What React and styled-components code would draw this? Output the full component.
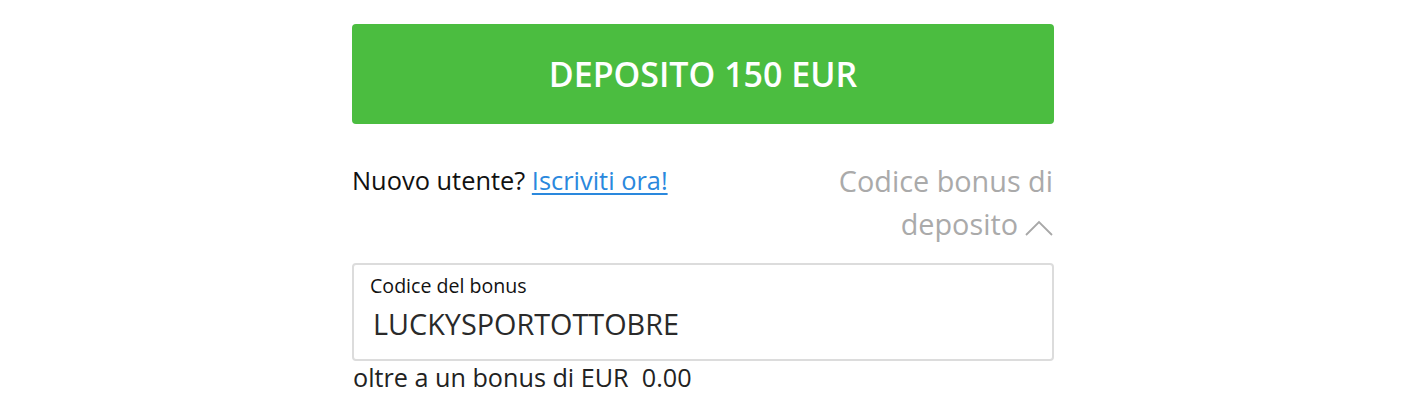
import React from "react";
import styled, { createGlobalStyle } from "styled-components";

const Global = createGlobalStyle`
  html, body { margin: 0; padding: 0; background: #fff; }
  body { font-family: "Open Sans", "Noto Sans", sans-serif; color: #111; }
`;

const Page = styled.div`
  width: 702px;
  margin: 0 auto;
  padding-top: 24px;
  transform: translateX(1px);
`;

const DepositButton = styled.button`
  display: flex;
  align-items: center;
  justify-content: center;
  width: 100%;
  height: 100px;
  border: none;
  border-radius: 4px;
  background: #4bbd40;
  color: #fff;
  font-family: "Open Sans", sans-serif;
  font-weight: 600;
  font-size: 34px;
  cursor: pointer;
  padding: 0;
`;

const InfoRow = styled.div`
  display: grid;
  grid-template-columns: 1fr 250px;
  margin-top: 35px;
`;

const NewUser = styled.div`
  font-size: 25.4px;
  line-height: 43px;
  color: #111;
`;

const Link = styled.a`
  color: #2a88dd;
  text-decoration: underline;
  text-underline-offset: 3px;
`;

const BonusToggle = styled.div`
  text-align: right;
  font-size: 28.8px;
  line-height: 43px;
  color: #aaa;
  padding-right: 1px;
`;

const Chevron = styled.svg`
  display: inline-block;
  width: 28px;
  height: 16px;
  margin-left: 7px;
  vertical-align: -1px;
`;

const Field = styled.div`
  box-sizing: border-box;
  margin-top: 18px;
  height: 98px;
  border: 2px solid #dcdcdc;
  border-radius: 4px;
  padding: 9px 16px 0 16px;
`;

const FieldLabel = styled.div`
  font-size: 19.6px;
  line-height: 24px;
  color: #111;
`;

const FieldValue = styled.div`
  margin-top: 8px;
  padding-left: 3px;
  font-size: 28.8px;
  line-height: 36px;
  color: #2a2a2a;
`;

const Note = styled.div`
  font-size: 25.2px;
  line-height: 32px;
  color: #222;
  padding-left: 1px;
`;

export default function App() {
  return (
    <>
      <Global />
      <Page>
        <DepositButton>DEPOSITO 150 EUR</DepositButton>
        <InfoRow>
          <NewUser>
            Nuovo utente? <Link href="#">Iscriviti ora!</Link>
          </NewUser>
          <BonusToggle>
            Codice bonus di deposito
            <Chevron viewBox="0 0 28 16" fill="none">
              <path d="M1 15 L14 2 L27 15" stroke="#a8a8a8" strokeWidth="1.8" />
            </Chevron>
          </BonusToggle>
        </InfoRow>
        <Field>
          <FieldLabel>Codice del bonus</FieldLabel>
          <FieldValue>LUCKYSPORTOTTOBRE</FieldValue>
        </Field>
        <Note>oltre a un bonus di EUR&nbsp; 0.00</Note>
      </Page>
    </>
  );
}
